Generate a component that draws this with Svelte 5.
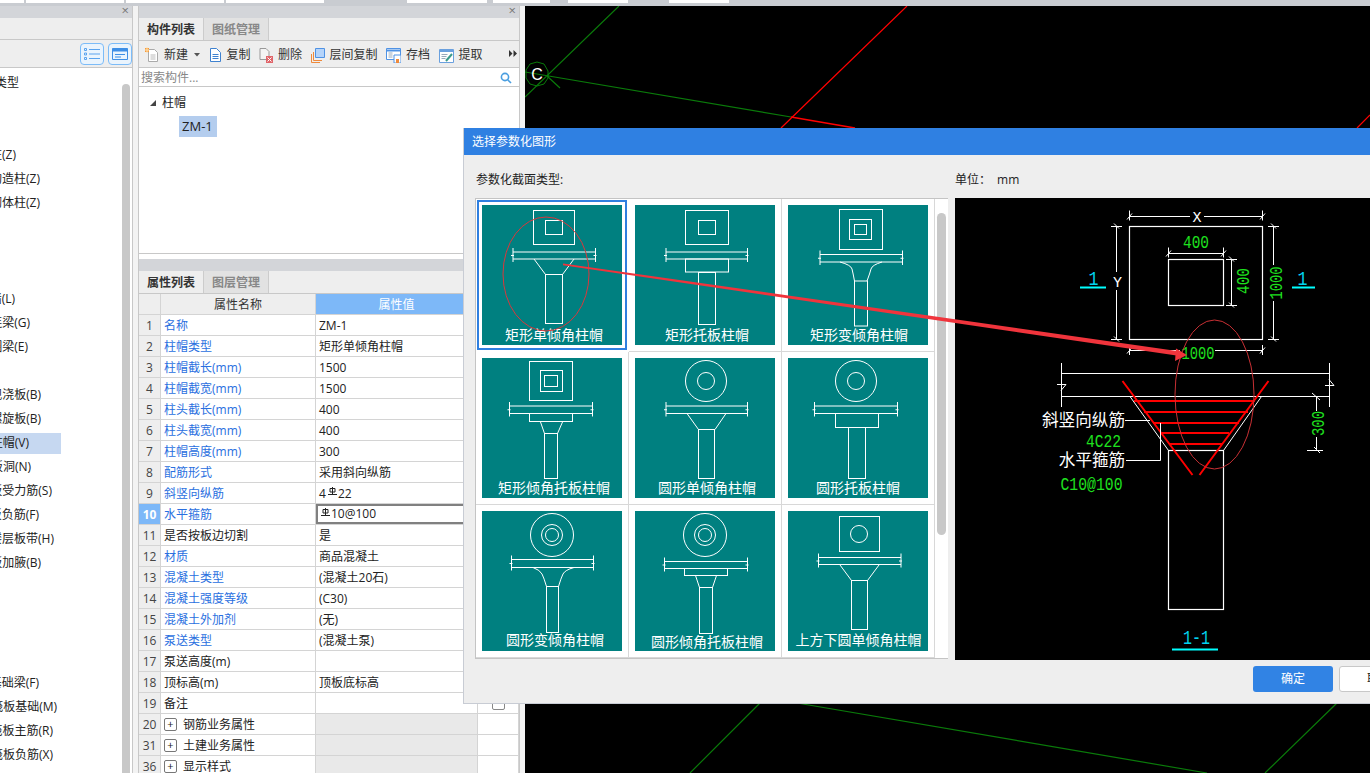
<script>
  // left tree: label + x where the label ends (the panel is scrolled sideways, so the start is cut off)
  const treeRows = [
    { t: '柱类型', end: 19 }, null, null,
    { t: '柱(Z)', end: 16 }, { t: '构造柱(Z)', end: 40 }, { t: '砌体柱(Z)', end: 40 },
    null, null, null,
    { t: '墙(L)', end: 15 }, { t: '连梁(G)', end: 30 }, { t: '圈梁(E)', end: 28 },
    null,
    { t: '现浇板(B)', end: 41 }, { t: '螺旋板(B)', end: 41 }, { t: '柱帽(V)', end: 29, sel: true },
    { t: '板洞(N)', end: 31 }, { t: '板受力筋(S)', end: 52 }, { t: '板负筋(F)', end: 39 },
    { t: '楼层板带(H)', end: 54 }, { t: '板加腋(B)', end: 41 },
    null, null, null, null,
    { t: '基础梁(F)', end: 39 }, { t: '筏板基础(M)', end: 57 }, { t: '筏板主筋(R)', end: 53 }, { t: '筏板负筋(X)', end: 53 }
  ];

  const props = [
    { n: '1', name: '名称', val: 'ZM-1', blue: true },
    { n: '2', name: '柱帽类型', val: '矩形单倾角柱帽', blue: true },
    { n: '3', name: '柱帽截长(mm)', val: '1500', blue: true },
    { n: '4', name: '柱帽截宽(mm)', val: '1500', blue: true },
    { n: '5', name: '柱头截长(mm)', val: '400', blue: true },
    { n: '6', name: '柱头截宽(mm)', val: '400', blue: true },
    { n: '7', name: '柱帽高度(mm)', val: '300', blue: true },
    { n: '8', name: '配筋形式', val: '采用斜向纵筋', blue: true },
    { n: '9', name: '斜竖向纵筋', pre: '4', val: '22', rebar: true, blue: true },
    { n: '10', name: '水平箍筋', val: '10@100', rebar: true, blue: true, active: true },
    { n: '11', name: '是否按板边切割', val: '是' },
    { n: '12', name: '材质', val: '商品混凝土', blue: true },
    { n: '13', name: '混凝土类型', val: '(混凝土20石)', blue: true },
    { n: '14', name: '混凝土强度等级', val: '(C30)', blue: true },
    { n: '15', name: '混凝土外加剂', val: '(无)', blue: true },
    { n: '16', name: '泵送类型', val: '(混凝土泵)', blue: true },
    { n: '17', name: '泵送高度(m)', val: '' },
    { n: '18', name: '顶标高(m)', val: '顶板底标高' },
    { n: '19', name: '备注', val: '', check: true },
    { n: '20', name: '钢筋业务属性', group: true },
    { n: '31', name: '土建业务属性', group: true },
    { n: '36', name: '显示样式', group: true }
  ];

  // thumbnails, in px inside the 140x140 teal tile
  const tiles = [
    { cap: '矩形单倾角柱帽', cx: 72, cy: 130,
      rects: [[51.5, 5.5, 41, 34], [63.5, 15.5, 17, 14], [63.5, 69.5, 17, 49]],
      slab: [31, 113.5, 47, 54], flare: 'M52 54L63.5 69.5M92 54L80.5 69.5' },
    { cap: '矩形托板柱帽', cx: 72, cy: 130,
      rects: [[50.5, 5.5, 43, 34], [63.5, 15.5, 17, 14], [50.5, 54, 43, 13], [63.5, 67.5, 17, 52]],
      slab: [31, 112.5, 47, 54], flare: '' },
    { cap: '矩形变倾角柱帽', cx: 71, cy: 130,
      rects: [[51.5, 4.5, 43, 40], [61.5, 14.5, 22, 20], [66.5, 19.5, 12, 10], [66.5, 76, 13, 45]],
      slab: [32, 114.5, 49.5, 57], flare: 'M52 57Q63 60 64 64T66.5 76M94 57Q84 60 83 64T79 76' },
    { cap: '矩形倾角托板柱帽', cx: 72, cy: 129.5,
      rects: [[47.5, 3.5, 43, 39], [58.5, 12.5, 22, 21], [62.5, 17.5, 13, 11], [47.5, 55.5, 43, 8], [62.5, 75.5, 13, 45]],
      slab: [27.5, 110.5, 48, 55.5], flare: 'M58.5 64L62.5 75.5M80.5 64L75.5 75.5' },
    { cap: '圆形单倾角柱帽', cx: 72, cy: 129.5,
      circles: [[71, 23, 20.5], [71, 23, 8.5]], rects: [[63.5, 71.5, 16, 49]],
      slab: [31, 112.5, 48, 55.5], flare: 'M52 55.5L63.5 71.5M91 55.5L80 71.5' },
    { cap: '圆形托板柱帽', cx: 70, cy: 129.5,
      circles: [[68, 23, 20.5], [68, 23, 8.5]], rects: [[47.5, 55.5, 43, 14], [60.5, 69.5, 17, 51]],
      slab: [26.5, 109.5, 48, 55.5], flare: '' },
    { cap: '圆形变倾角柱帽', cx: 73, cy: 129,
      circles: [[70, 24, 21.5], [70, 24, 10.5], [70, 24, 6.5]], rects: [[64.5, 75.5, 12, 46]],
      slab: [29.5, 111.5, 48.5, 56.5], flare: 'M51 56.5Q58 59 60 63T64.5 75.5M92 56.5Q83 59 81 63T76.5 75.5' },
    { cap: '圆形倾角托板柱帽', cx: 72, cy: 130.5,
      circles: [[70, 24, 21.5], [70, 24, 10.5], [70, 24, 6.5]], rects: [[49.5, 57.5, 43, 7], [64.5, 76.5, 13, 46]],
      slab: [29.5, 112.5, 50.5, 57.5], flare: 'M60.5 64.5L64.5 76.5M81.5 64.5L77.5 76.5' },
    { cap: '上方下圆单倾角柱帽', cx: 70.5, cy: 129,
      circles: [[71, 23, 8.5]], rects: [[51.5, 5.5, 40, 35], [63.5, 69.5, 16, 49]],
      slab: [30.5, 113, 46.5, 53.5], flare: 'M52 54L63.5 69.5M91 54L79.5 69.5' }
  ];
</script>

<div class="app">
  <div class="topstrip">
    <i style="width:24px"></i><i class="gap" style="width:2px"></i><i style="width:98px"></i><i class="gap" style="width:2px"></i>
    <i style="width:98px"></i><i class="gap" style="width:2px"></i><i style="width:98px"></i><i class="gap" style="width:83px"></i>
    <i style="width:80px"></i><i class="gap" style="width:6px"></i><i style="width:57px"></i><i class="gap" style="width:18px"></i>
    <i style="width:60px"></i><i class="gap" style="width:41px"></i><i style="width:60px"></i>
  </div>

  <div class="main">
    <aside class="left">
      <div class="dockhead"><span class="close">×</span></div>
      <div class="lefttabs"></div>
      <div class="lefttools">
        <span class="viewbtn">
          <svg width="18" height="14" viewBox="0 0 18 14" fill="none" stroke="#5aa3ee">
            <path d="M1.5 1.5h2v2h-2zM1.5 6h2v2h-2zM1.5 10.5h2v2h-2zM6 2.5h11M6 7h11M6 11.5h11" />
          </svg>
        </span>
        <span class="viewbtn">
          <svg width="16" height="14" viewBox="0 0 16 14" fill="none" stroke="#3f8fe6">
            <path d="M.5 1.5h15v11H.5z" /><path d="M.5 3h15" stroke-width="3" /><path d="M3 7.5h10M3 10h6" />
          </svg>
        </span>
      </div>
      <div class="tree">
        {#each treeRows as r}
          <div class="treerow">
            {#if r}
              <div class="treelabel" class:sel={r.sel} style="width:{r.sel ? 61 : r.end}px">
                <span style="margin-right:{r.sel ? 61 - r.end : 0}px">{r.t}</span>
              </div>
            {/if}
          </div>
        {/each}
        <div class="leftscroll"></div>
      </div>
    </aside>

    <section class="mid">
      <div class="dockhead"><span class="close">×</span></div>
      <div class="tabs">
        <span class="tab on">构件列表</span><span class="tab">图纸管理</span>
      </div>
      <div class="tools">
        <span class="tool">
          <svg width="14" height="16" viewBox="0 0 14 16" fill="none">
            <path d="M3.5 2.5h6l3 3v9h-9z" fill="#fff" stroke="#aaa" /><path d="M5.5 8h5M5.5 10h5M5.5 12h5" stroke="#bbb" />
            <path d="M0 1h4v4H0z" fill="#f59a3c" /><path d="M2 0v6M0 3h4" stroke="#ffe2b0" />
          </svg>
          新建<svg class="caret" width="6" height="4" viewBox="0 0 6 4"><path d="M0 0h6L3 3.5z" fill="#555" /></svg>
        </span>
        <span class="tool">
          <svg width="13" height="14" viewBox="0 0 13 14" fill="none" stroke="#3f82d0">
            <path d="M1.5.5h6l4 4v9h-10z" fill="#fff" /><path d="M3.5 6.5h6M3.5 8.5h6M3.5 10.5h6" />
          </svg>
          复制
        </span>
        <span class="tool">
          <svg width="14" height="15" viewBox="0 0 14 15" fill="none">
            <path d="M1 .5h6l3 3v8H1z" stroke="#999" fill="#f4f4f4" /><path d="M7 8h7v7H7z" fill="#e0656a" /><path d="M8.5 9.5l4 4m0-4l-4 4" stroke="#fff" />
          </svg>
          删除
        </span>
        <span class="tool">
          <svg width="14" height="15" viewBox="0 0 14 15" fill="none">
            <path d="M.5 14.5V6M.5 14.5H9M2.5 12.5V4M2.5 12.5H11" stroke="#ee8a3c" />
            <path d="M4.5.5h9v9h-9z" fill="#b5d4fa" stroke="#4f92e4" />
          </svg>
          层间复制
        </span>
        <span class="tool">
          <svg width="15" height="15" viewBox="0 0 15 15" fill="none">
            <path d="M.5.5h14v11H.5z" fill="#fff" stroke="#4f92e4" /><path d="M.5 2.5h14" stroke="#4f92e4" stroke-width="2" />
            <path d="M2.5 5h4M2.5 7h4M2.5 9h4" stroke="#9ab" /><path d="M8 7h7v8H8z" fill="#fff" stroke="#4f92e4" /><path d="M10 11h3v4h-3z" fill="#ee8a3c" />
          </svg>
          存档
        </span>
        <span class="tool">
          <svg width="15" height="15" viewBox="0 0 15 15" fill="none">
            <path d="M.5 1.5h14v13H.5z" fill="#fff" stroke="#6aa0de" /><path d="M.5 3h14" stroke="#6aa0de" stroke-width="2" />
            <path d="M2.5 6.5h6M2.5 8.5h5M2.5 10.5h4" stroke="#9ab" /><path d="M7 13l6-7" stroke="#3a9a8a" stroke-width="2" />
          </svg>
          提取
        </span>
        <svg class="more" width="8" height="7" viewBox="0 0 8 7" fill="#333"><path d="M0 0l3.5 3.5L0 7zM4.5 0L8 3.5 4.5 7z" /></svg>
      </div>
      <div class="search">
        <span>搜索构件...</span>
        <svg width="12" height="12" viewBox="0 0 12 12" fill="none" stroke="#4a9ee0" stroke-width="1.6">
          <circle cx="5" cy="5" r="3.6" /><path d="M7.7 7.7l3.3 3.3" />
        </svg>
      </div>
      <div class="parts">
        <div class="parthead"><i class="tri"></i>柱帽</div>
        <div class="partitem"><span>ZM-1</span></div>
      </div>
      <div class="dockhead second"></div>
      <div class="tabs">
        <span class="tab on">属性列表</span><span class="tab">图层管理</span>
      </div>
      <div class="grid">
        <div class="row headrow">
          <div class="num"></div><div class="name">属性名称</div><div class="val">属性值</div><div class="extra"></div>
        </div>
        {#each props as p}
          <div class="row">
            <div class="num" class:active={p.active}>{p.n}</div>
            <div class="name" class:blue={p.blue}>
              {#if p.group}<i class="plus">+</i>{/if}{p.name}
            </div>
            <div class="val" class:group={p.group} class:editing={p.active}>
              {#if p.pre}{p.pre}{/if}{#if p.rebar}<svg class="rebar" width="9" height="9" viewBox="0 0 9 9" fill="none" stroke="#222"><path d="M4.5 0v8M2 1.5h5v3.5h-5zM0 7.5h9" /></svg>{/if}{p.val ?? ''}
            </div>
            <div class="extra">{#if p.check}<i class="check"></i>{/if}</div>
          </div>
        {/each}
      </div>
    </section>

    <div class="canvas">
      <svg width="845" height="767" viewBox="525 6 845 767" fill="none">
        <path d="M619 6L525 97M525 72L791 117M547 76L560 88M797 703L1207 773M1337 703L1265 773M760 703L690 773" stroke="#0a7a0a" stroke-width="1.2" />
        <path d="M530 64l7-2 7 2 4 7v7l-4 6-7 2-7-2-4-6v-8z" stroke="#0a7a0a" />
        <text x="537" y="80" class="axis">C</text>
        <path d="M791 117L855 128" stroke="#f00" stroke-width="1.6" />
        <path d="M907 6L781 128M1370 115L1357 128" stroke="#f00" stroke-width="1.2" />
      </svg>
    </div>
  </div>

  <div class="dialog">
    <div class="dtitle">选择参数化图形</div>
    <div class="dbody">
      <div class="dleft">
        <div class="dlabel">参数化截面类型:</div>
        <div class="gallery">
          {#each tiles as tile, i}
            <div class="cell" class:picked={i === 0}>
              <svg class="thumb" width="140" height="140" viewBox="0 0 140 140" fill="none" stroke="#fff">
                {#each tile.rects as r}
                  <rect x={r[0]} y={r[1]} width={r[2]} height={r[3]} />
                {/each}
                {#each tile.circles ?? [] as c}
                  <circle cx={c[0]} cy={c[1]} r={c[2]} />
                {/each}
                <path d="M{tile.slab[0]} {tile.slab[2]}H{tile.slab[1]}M{tile.slab[0]} {tile.slab[3]}H{tile.slab[1]}M{tile.slab[0]} {tile.slab[2] - 4}V{tile.slab[3] + 3}M{tile.slab[1]} {tile.slab[2] - 4}V{tile.slab[3] + 3}M{tile.slab[0] - 2} {(tile.slab[2] + tile.slab[3]) / 2}h3M{tile.slab[1] - 2} {(tile.slab[2] + tile.slab[3]) / 2}h3" />
                {#if tile.flare}<path d={tile.flare} />{/if}
                <text x={tile.cx} y={tile.cy + 5} class="cap">{tile.cap}</text>
              </svg>
            </div>
          {/each}
          <div class="galscroll"></div>
        </div>
      </div>
      <div class="dright">
        <div class="unit"><span>单位：</span><span class="mm">mm</span></div>
        <svg class="preview" width="415" height="462" viewBox="955 198 415 462" fill="none" stroke="#fff">
          <rect x="1129.5" y="226.5" width="133" height="113" stroke-width="1.2" />
          <rect x="1168.5" y="259.5" width="55" height="46" stroke-width="1.2" />
          <!-- dimensions -->
          <path d="M1129.5 216.5H1190M1204 216.5H1262.5M1129.5 210.5v10M1262.5 210.5v10M1127 219.5l5-6M1260 219.5l5-6" />
          <path d="M1116.5 226.5V272M1116.5 290V339.5M1111 226.5h11M1111 339.5h11M1114 223.5l5 5M1114 336.5l5 5" />
          <path d="M1168.5 253.5H1223.5M1168.5 247.5v10M1223.5 247.5v10M1166 256.5l5-6M1221 256.5l5-6" />
          <path d="M1231.5 259.5V305.5M1226 259.5h11M1226 305.5h11M1229 256.5l5 5M1229 302.5l5 5" />
          <path d="M1273.5 226.5V265M1273.5 301V339.5M1268 226.5h11M1268 339.5h11M1271 223.5l5 5M1271 336.5l5 5" />
          <path d="M1129.5 350.5H1180M1215 350.5H1262.5M1129.5 345v10M1262.5 345v10M1127 353.5l5-6M1260 353.5l5-6" />
          <text x="1197" y="222" class="dimw">X</text>
          <text x="1117.5" y="287" class="dimw">Y</text>
          <text x="1196" y="248" class="dimg" textLength="26" lengthAdjust="spacingAndGlyphs">400</text>
          <text x="1198" y="358.5" class="dimg" textLength="33" lengthAdjust="spacingAndGlyphs">1000</text>
          <text transform="translate(1248.5 281) rotate(-90)" class="dimg" textLength="26" lengthAdjust="spacingAndGlyphs">400</text>
          <text transform="translate(1281.5 283) rotate(-90)" class="dimg" textLength="33" lengthAdjust="spacingAndGlyphs">1000</text>
          <text x="1093.5" y="284.5" class="dimc" textLength="10" lengthAdjust="spacingAndGlyphs">1</text>
          <text x="1302.5" y="284.5" class="dimc" textLength="10" lengthAdjust="spacingAndGlyphs">1</text>
          <path d="M1080 287.5h26M1292 287.5h23M1172 649.5h46" stroke="#0ff" stroke-width="2" />
          <!-- slab -->
          <path d="M1061.5 373.5H1329.5M1061.5 396.5H1329.5M1061.5 363V407M1329.5 363V407M1057 384.5h9l-5 6M1325 385.5h9l-5-6" />
          <path d="M1316.5 396.5V411M1316.5 437V450.5M1307 450.5h16M1312 393l8 7M1314 447l6 6" />
          <text transform="translate(1323.5 423.5) rotate(-90)" class="dimg" textLength="25" lengthAdjust="spacingAndGlyphs">300</text>
          <path d="M1130 396.5L1168.5 450.5M1261.5 396.5L1223.5 450.5" />
          <rect x="1168.5" y="450.5" width="55" height="159" stroke-width="1.2" />
          <!-- rebar -->
          <path d="M1122.5 381L1192.5 475M1268.5 381L1199.5 475" stroke="#f00" stroke-width="2" />
          <path d="M1134 401H1255M1144 412H1248M1153 423H1239M1162 433H1229M1169 444H1222" stroke="#f00" stroke-width="2" />
          <!-- labels -->
          <path d="M1125 420.5H1150M1126 460.5H1160.5V423" />
          <text x="1083.5" y="426" class="labw">斜竖向纵筋</text>
          <text x="1092" y="465.5" class="labw">水平箍筋</text>
          <text x="1103.5" y="447" class="dimg" textLength="35" lengthAdjust="spacingAndGlyphs">4C22</text>
          <text x="1091.5" y="490" class="dimg" textLength="62" lengthAdjust="spacingAndGlyphs">C10@100</text>
          <text x="1196.5" y="644" class="dimc" textLength="27" lengthAdjust="spacingAndGlyphs">1-1</text>
        </svg>
      </div>
    </div>
    <div class="dfoot">
      <button class="ok">确定</button>
      <button class="cancel">取消</button>
    </div>
  </div>

  <!-- red markup someone drew on top of the screenshot -->
  <svg class="markup" width="1370" height="773" viewBox="0 0 1370 773" fill="none">
    <ellipse cx="546" cy="274" rx="43" ry="57" stroke="#d8383c" />
    <ellipse cx="1214.5" cy="394.5" rx="39.5" ry="74.5" stroke="#c83034" />
    <path d="M563 263.4L1177 351L1176.5 355.5L563 265.2z" fill="#f0343c" />
    <path d="M1187 355L1176 348.5L1175 361z" fill="#f0343c" />
  </svg>
</div>

<style>
  :global(body) {
    margin: 0;
    background: #f3f3f3;
  }
  .app {
    position: relative;
    width: 1370px;
    height: 773px;
    overflow: hidden;
    font: 12px/1 "Open Sans", "Noto Sans CJK SC", sans-serif;
    color: #222;
    display: flex;
    flex-direction: column;
  }
  .topstrip {
    height: 6px;
    background: #c9ccd1;
    display: flex;
    align-items: flex-start;
    flex: none;
  }
  .topstrip i {
    height: 3px;
    background: #fff;
  }
  .topstrip i.gap {
    background: transparent;
  }
  .main {
    flex: 1;
    display: flex;
    min-height: 0;
  }
  .dockhead {
    height: 12px;
    background: #d3d5d9;
    position: relative;
    flex: none;
  }
  .close {
    position: absolute;
    right: 3px;
    top: -2px;
    font-size: 13px;
    line-height: 13px;
    color: #777;
  }

  /* left dock */
  .left {
    width: 133px;
    flex: none;
    display: flex;
    flex-direction: column;
    background: #fff;
    border-right: 1px solid #c8c8c8;
    box-sizing: border-box;
  }
  .lefttabs {
    height: 22px;
    background: #eee;
    border-bottom: 1px solid #c8c8c8;
    flex: none;
    box-sizing: border-box;
  }
  .lefttools {
    height: 28px;
    background: #eee;
    border-bottom: 1px solid #c8c8c8;
    flex: none;
    display: flex;
    justify-content: flex-end;
    align-items: center;
    gap: 4px;
    box-sizing: border-box;
  }
  .viewbtn {
    width: 24px;
    height: 22px;
    box-sizing: border-box;
    border: 1px solid #7cbcf8;
    border-radius: 4px;
    background: #eaf4fd;
    display: flex;
    align-items: center;
    justify-content: center;
  }
  .tree {
    position: relative;
    flex: 1;
    overflow: hidden;
    padding-top: 3px;
  }
  .treerow {
    height: 24px;
    display: flex;
    align-items: center;
  }
  .treelabel {
    height: 21px;
    display: flex;
    justify-content: flex-end;
    align-items: center;
    white-space: nowrap;
    flex: none;
  }
  .treelabel.sel {
    background: #c6d8f1;
  }
  .leftscroll {
    position: absolute;
    right: 2px;
    top: 16px;
    bottom: -4px;
    width: 8px;
    background: #c8c8c8;
    border-radius: 4px 4px 0 0;
  }

  /* middle dock */
  .mid {
    width: 382px;
    margin-left: 5px;
    flex: none;
    display: flex;
    flex-direction: column;
    background: #fff;
    border-left: 1px solid #c8c8c8;
    border-right: 1px solid #c8c8c8;
    box-sizing: border-box;
  }
  .tabs {
    height: 23px;
    background: #eee;
    border-bottom: 1px solid #c8c8c8;
    box-sizing: border-box;
    display: flex;
    flex: none;
  }
  .tab {
    width: 65px;
    display: flex;
    align-items: center;
    justify-content: center;
    padding-top: 2px;
    background: #e2e2e2;
    color: #888;
    font-weight: 700;
    border-right: 1px solid #ccc;
    box-sizing: border-box;
  }
  .tab.on {
    background: #eee;
    color: #333;
  }
  .tools {
    height: 27px;
    background: #eee;
    border-bottom: 1px solid #c8c8c8;
    box-sizing: border-box;
    display: flex;
    align-items: center;
    gap: 8.5px;
    padding: 2px 0 0 6px;
    position: relative;
    flex: none;
  }
  .tool {
    display: flex;
    align-items: center;
    gap: 5px;
    color: #333;
  }
  .caret {
    margin-left: 1px;
  }
  .more {
    position: absolute;
    right: 2px;
    top: 9px;
  }
  .search {
    height: 19px;
    border-bottom: 1px solid #c8c8c8;
    box-sizing: border-box;
    display: flex;
    align-items: center;
    justify-content: space-between;
    padding: 2px 7px 0 2px;
    color: #888;
    flex: none;
  }
  .parts {
    height: 167px;
    border-bottom: 1px solid #c8c8c8;
    box-sizing: border-box;
    flex: none;
    padding-top: 5px;
  }
  .parthead {
    height: 21px;
    display: flex;
    align-items: center;
    padding-left: 23px;
    position: relative;
  }
  .tri {
    position: absolute;
    left: 11px;
    top: 8px;
    width: 0;
    height: 0;
    border-left: 6px solid transparent;
    border-bottom: 6px solid #444;
  }
  .partitem {
    margin: 3px 0 0 40px;
  }
  .partitem span {
    display: inline-flex;
    align-items: center;
    padding-left: 3px;
    box-sizing: border-box;
    width: 38px;
    height: 21px;
    background: #b4cdee;
    font-size: 13px;
  }
  .second {
    margin-top: 5px;
  }
  .grid {
    flex: 1;
    overflow: hidden;
  }
  .row {
    display: grid;
    grid-template-columns: 22px 155px 162px 1fr;
    height: 21px;
    box-sizing: border-box;
    border-bottom: 1px solid #d4d4d4;
  }
  .row > div {
    display: flex;
    align-items: center;
    box-sizing: border-box;
    border-right: 1px solid #d4d4d4;
    white-space: nowrap;
    padding-top: 1px;
  }
  .num {
    justify-content: center;
    background: #eee;
    color: #444;
  }
  .num.active {
    background: #7db8f8;
    color: #fff;
    font-weight: 700;
  }
  .name {
    padding-left: 3px;
  }
  .name.blue {
    color: #2a6fe0;
  }
  .val {
    padding-left: 3px;
    background: #fff;
  }
  .val.group {
    background: #e9e9e9;
  }
  .row > .val.editing {
    border: 2px solid #808080;
    padding: 0 0 0 1px;
  }
  .headrow .name {
    justify-content: center;
    background: #eee;
    padding-left: 0;
    color: #333;
  }
  .headrow .val {
    justify-content: center;
    background: #7db8f8;
    color: #fff;
    padding-left: 0;
  }
  .headrow .extra {
    background: #eee;
  }
  .plus {
    width: 13px;
    height: 13px;
    box-sizing: border-box;
    border: 1px solid #777;
    border-radius: 2px;
    margin-right: 6px;
    font-style: normal;
    font-size: 11px;
    line-height: 10px;
    text-align: center;
    display: inline-block;
  }
  .extra {
    justify-content: center;
    background: #fff;
  }
  .check {
    width: 13px;
    height: 13px;
    box-sizing: border-box;
    border: 1px solid #888;
    border-radius: 2px;
  }
  .rebar {
    margin: -4px 1px 0 2px;
    flex: none;
  }

  /* CAD canvas */
  .canvas {
    flex: 1;
    margin-left: 5px;
    background: #000;
  }
  .canvas svg {
    display: block;
  }
  .axis {
    fill: #fff;
    stroke: none;
    font-size: 16px;
    text-anchor: middle;
    font-family: "Liberation Sans", sans-serif;
  }

  /* dialog */
  .dialog {
    position: absolute;
    left: 463px;
    top: 128px;
    width: 907px;
    height: 576px;
    box-sizing: border-box;
    background: #eee;
    border-left: 1px solid #c8ccd4;
    border-bottom: 1px solid #c8ccd4;
    display: flex;
    flex-direction: column;
    overflow: hidden;
  }
  .dtitle {
    height: 27px;
    background: #2f80e2;
    color: #fff;
    display: flex;
    align-items: center;
    padding-left: 8px;
    flex: none;
  }
  .dbody {
    display: flex;
    flex: none;
    padding-left: 11px;
  }
  .dlabel,
  .unit {
    height: 43px;
    display: flex;
    align-items: center;
    padding-top: 7px;
    box-sizing: border-box;
    color: #222;
  }
  .dlabel {
    padding-left: 1px;
  }
  .dleft {
    width: 480px;
    flex: none;
  }
  .gallery {
    position: relative;
    width: 473px;
    height: 461px;
    box-sizing: border-box;
    border: 1px solid #c4c4c4;
    border-right: 0;
    background: #fff;
    padding: 0 12px 0 0;
    display: grid;
    grid-template-columns: repeat(3, 153px);
    grid-auto-rows: 153px;
  }
  .cell {
    box-sizing: border-box;
    border-right: 1px solid #d8d8d8;
    border-bottom: 1px solid #d8d8d8;
    padding: 6px 0 0 6px;
  }
  .cell.picked {
    border: 2px solid #2f7fe0;
    padding: 3px 0 0 3px;
    margin: 1px;
    width: 150px;
    height: 150px;
  }
  .thumb {
    display: block;
    background: #008080;
  }
  .cap {
    fill: #fff;
    stroke: none;
    font-size: 14px;
    text-anchor: middle;
  }
  .galscroll {
    position: absolute;
    left: 461px;
    top: 14px;
    width: 9px;
    height: 322px;
    background: #c8c8c8;
    border-radius: 5px;
  }
  .unit .mm {
    margin-left: 6px;
  }
  .preview {
    display: block;
    background: #000;
  }
  .dimw,
  .dimg,
  .dimc,
  .labw {
    stroke: none;
    font-family: "Liberation Mono", monospace;
    text-anchor: middle;
  }
  .dimw {
    fill: #fff;
    font-size: 15px;
  }
  .dimg {
    fill: #1fe01f;
    font-size: 18px;
  }
  .dimc {
    fill: #00d4f0;
    font-size: 21px;
  }
  .labw {
    fill: #fff;
    font-family: "Noto Sans CJK SC", sans-serif;
    font-size: 16.6px;
  }
  .dfoot {
    display: flex;
    gap: 6px;
    padding: 6px 0 0 789px;
  }
  .dfoot button {
    width: 80px;
    height: 26px;
    flex: none;
    border-radius: 3px;
    font: inherit;
    padding: 0;
  }
  .ok {
    background: #3183e4;
    border: 0;
    color: #fff;
  }
  .cancel {
    background: #fff;
    border: 1px solid #c8c8c8;
    color: #222;
  }
  .markup {
    position: absolute;
    left: 0;
    top: 0;
    pointer-events: none;
  }
</style>
